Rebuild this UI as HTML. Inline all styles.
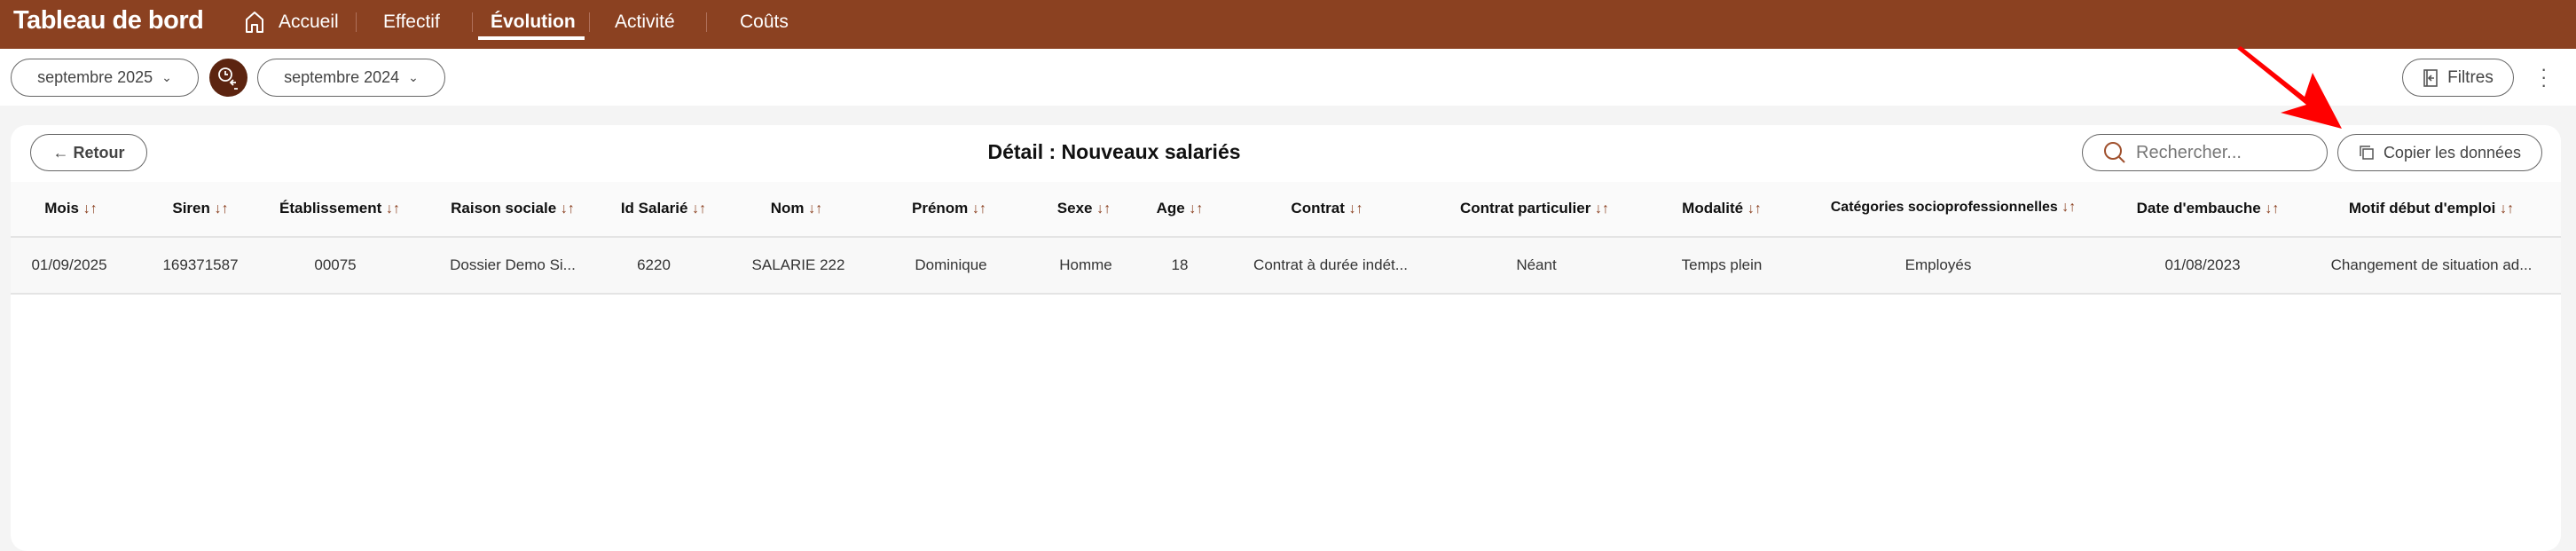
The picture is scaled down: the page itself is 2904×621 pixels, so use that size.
<!DOCTYPE html>
<html><head><meta charset="utf-8"><style>
*{margin:0;padding:0;box-sizing:border-box}
body{width:2904px;height:614px;overflow:hidden;background:#f4f4f4;font-family:"Liberation Sans",sans-serif;position:relative;color:#222}
.a{position:absolute;white-space:nowrap}
.c{transform:translateX(-50%)}
.hdr{position:absolute;left:0;top:0;width:2904px;height:55px;background:#8b4121}
.nav{color:#fff;font-size:21px;top:13px}
.sep{position:absolute;top:14px;width:1px;height:22px;background:#b0705a}
.bar2{position:absolute;left:0;top:55px;width:2904px;height:64px;background:#fff}
.pill{position:absolute;border:1.5px solid #666;border-radius:22px;background:#fff;height:43px;font-size:18px;color:#444;display:flex;align-items:center;justify-content:center;gap:10px}
.card{position:absolute;left:12px;top:141px;width:2875px;height:480px;background:#fff;border-radius:18px}
.th{position:absolute;left:12px;top:205px;width:2875px;height:63px;background:#fafafa;border-bottom:2px solid #e4e4e4}
.tr{position:absolute;left:12px;top:268px;width:2875px;height:64px;background:#f8f8f8;border-bottom:2px solid #e4e4e4}
.h{top:225px;font-size:17px;font-weight:bold;color:#111}
.h span{color:#8b4121;font-weight:normal;font-size:16px}
.d{top:289px;font-size:17px;color:#333}
</style></head><body>
<div class="hdr"></div>
<div class="a" style="left:15px;top:7px;color:#fff;font-size:29px;font-weight:bold;letter-spacing:-0.5px">Tableau de bord</div>
<svg class="a" style="left:275px;top:12px" width="24" height="26" viewBox="0 0 24 26"><path d="M3 24V10L12 2l9 8v14h-6v-8h-6v8z" fill="none" stroke="#fff" stroke-width="2" stroke-linejoin="round"/></svg>
<div class="a nav" style="left:314px">Accueil</div>
<div class="sep" style="left:401px"></div>
<div class="a nav" style="left:432px">Effectif</div>
<div class="sep" style="left:532px"></div>
<div class="a nav" style="left:553px;font-weight:bold">Évolution</div>
<div class="a" style="left:539px;top:41px;width:120px;height:4px;background:#fff"></div>
<div class="sep" style="left:664px"></div>
<div class="a nav" style="left:693px">Activité</div>
<div class="sep" style="left:796px"></div>
<div class="a nav" style="left:834px">Coûts</div>
<div class="bar2"></div>
<div class="pill" style="left:12px;top:66px;width:212px">septembre 2025 <span style="font-size:14px">&#8964;</span></div>
<div class="a" style="left:236px;top:66px;width:43px;height:43px;border-radius:50%;background:#5c2410"></div>
<svg class="a" style="left:243px;top:74px" width="30" height="30" viewBox="0 0 30 30" fill="none" stroke="#fff" stroke-width="1.8"><circle cx="11" cy="10" r="7"/><path d="M11 6v4h3M20 16l-3 3 3 3M17 19h6M21 26h4"/></svg>
<div class="pill" style="left:290px;top:66px;width:212px">septembre 2024 <span style="font-size:14px">&#8964;</span></div>
<div class="pill" style="left:2708px;top:66px;width:126px;font-size:19px"><svg width="18" height="22" viewBox="0 0 18 22" fill="none" stroke="#555" stroke-width="1.6"><rect x="2" y="2" width="14" height="18"/><path d="M5 2v18M13 11H8m2-3-3 3 3 3"/></svg>Filtres</div>
<div class="a" style="left:2864px;top:73px;font-size:22px;color:#555;line-height:9px">·<br>·<br>·</div>
<div class="card"></div>
<div class="pill" style="left:34px;top:151px;width:132px;height:42px;font-size:18px;font-weight:bold;color:#444">&#8592; Retour</div>
<div class="a c" style="left:1256px;top:158px;font-size:23px;font-weight:bold;color:#111">Détail : Nouveaux salariés</div>
<div class="pill" style="left:2347px;top:151px;width:277px;height:42px;justify-content:flex-start;padding-left:22px;font-size:20px;color:#777"><svg width="28" height="28" viewBox="0 0 28 28" fill="none" stroke="#a0512e" stroke-width="2"><circle cx="12" cy="12" r="9"/><path d="M19 19l6 6"/></svg>Rechercher...</div>
<div class="pill" style="left:2635px;top:151px;width:231px;height:42px;font-size:18px;color:#444"><svg width="18" height="18" viewBox="0 0 18 18" fill="none" stroke="#555" stroke-width="1.5"><rect x="5" y="5" width="11" height="11"/><path d="M2 13V2h11"/></svg>Copier les données</div>
<div class="th"></div><div class="tr"></div>
<div class="a h c" style="left:80px">Mois <span>↓↑</span></div>
<div class="a h c" style="left:226px">Siren <span>↓↑</span></div>
<div class="a h c" style="left:383px">Établissement <span>↓↑</span></div>
<div class="a h c" style="left:578px">Raison sociale <span>↓↑</span></div>
<div class="a h c" style="left:748px">Id Salarié <span>↓↑</span></div>
<div class="a h c" style="left:898px">Nom <span>↓↑</span></div>
<div class="a h c" style="left:1070px">Prénom <span>↓↑</span></div>
<div class="a h c" style="left:1222px">Sexe <span>↓↑</span></div>
<div class="a h c" style="left:1330px">Age <span>↓↑</span></div>
<div class="a h c" style="left:1496px">Contrat <span>↓↑</span></div>
<div class="a h c" style="left:1730px">Contrat particulier <span>↓↑</span></div>
<div class="a h c" style="left:1941px">Modalité <span>↓↑</span></div>
<div class="a h c" style="left:2202px;font-size:16px">Catégories socioprofessionnelles <span>↓↑</span></div>
<div class="a h c" style="left:2489px">Date d'embauche <span>↓↑</span></div>
<div class="a h c" style="left:2741px">Motif début d'emploi <span>↓↑</span></div>
<div class="a d c" style="left:78px">01/09/2025</div>
<div class="a d c" style="left:226px">169371587</div>
<div class="a d c" style="left:378px">00075</div>
<div class="a d c" style="left:578px">Dossier Demo Si...</div>
<div class="a d c" style="left:737px">6220</div>
<div class="a d c" style="left:900px">SALARIE 222</div>
<div class="a d c" style="left:1072px">Dominique</div>
<div class="a d c" style="left:1224px">Homme</div>
<div class="a d c" style="left:1330px">18</div>
<div class="a d c" style="left:1500px">Contrat à durée indét...</div>
<div class="a d c" style="left:1732px">Néant</div>
<div class="a d c" style="left:1941px">Temps plein</div>
<div class="a d c" style="left:2185px">Employés</div>
<div class="a d c" style="left:2483px">01/08/2023</div>
<div class="a d c" style="left:2741px">Changement de situation ad...</div>
<svg class="a" style="left:0;top:0" width="2904" height="614"><path d="M2522 55L2600 118L2571 127L2640 145L2607 82L2598 109L2526 52Z" fill="#f00"/></svg>
</body></html>
